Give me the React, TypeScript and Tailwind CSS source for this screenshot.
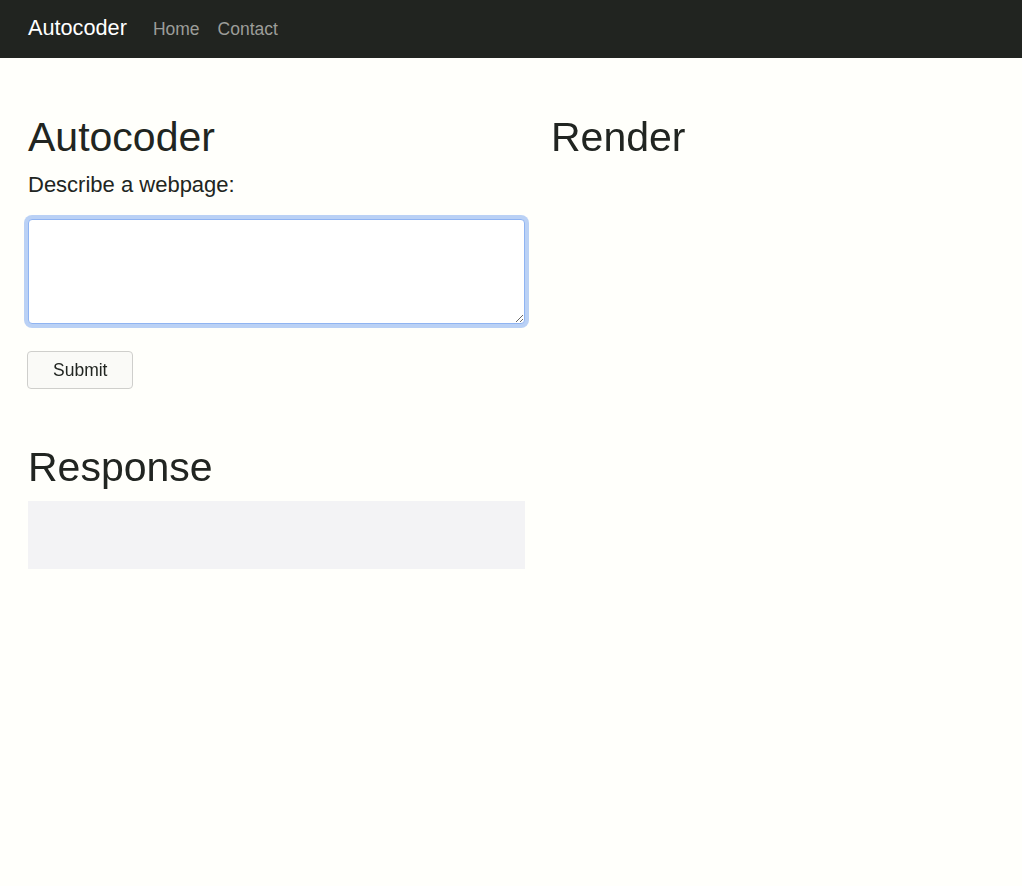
import { useState } from 'react'

export default function App() {
  const [prompt, setPrompt] = useState('')

  return (
    <div className="min-h-[886px] bg-[#fffffb] text-[#212521] font-['Liberation_Sans',Arial,sans-serif]">
      <nav className="h-[58px] bg-[#212420] flex items-center px-[28px] pb-[2px]">
        <div className="flex items-baseline">
          <span className="text-[21.7px] text-white">Autocoder</span>
          <a className="ml-[26px] text-[17.5px] text-[#9c9d99]">Home</a>
          <a className="ml-[18px] text-[17.5px] text-[#9c9d99]">Contact</a>
        </div>
      </nav>

      <main className="flex px-[28px] pt-[55px]">
        <div className="w-[497px] shrink-0">
          <h1 className="text-[41px] leading-[1.2]">Autocoder</h1>
          <label className="block mt-[6px] text-[22px] leading-[1.5]">Describe a webpage:</label>
          <textarea
            autoFocus
            value={prompt}
            onChange={(e) => setPrompt(e.target.value)}
            className="block mt-[18px] w-full h-[105px] px-[13px] py-[6px] text-[17.5px] leading-[1.5] bg-white border border-[#8fb4f2] rounded-[4px] outline-none ring-4 ring-[#a9c6f4]/80"
          />
          <button className="mt-[27px] -ml-px h-[38px] px-[25px] text-[17.5px] bg-[#fafaf7] border border-[#cfcfcc] rounded-[4px]">
            Submit
          </button>
          <h1 className="mt-[54px] text-[41px] leading-[1.2]">Response</h1>
          <div className="mt-[9px] h-[68px] bg-[#f3f3f5]"></div>
        </div>
        <div className="ml-[26px] flex-1">
          <h1 className="text-[41px] leading-[1.2]">Render</h1>
        </div>
      </main>
    </div>
  )
}
